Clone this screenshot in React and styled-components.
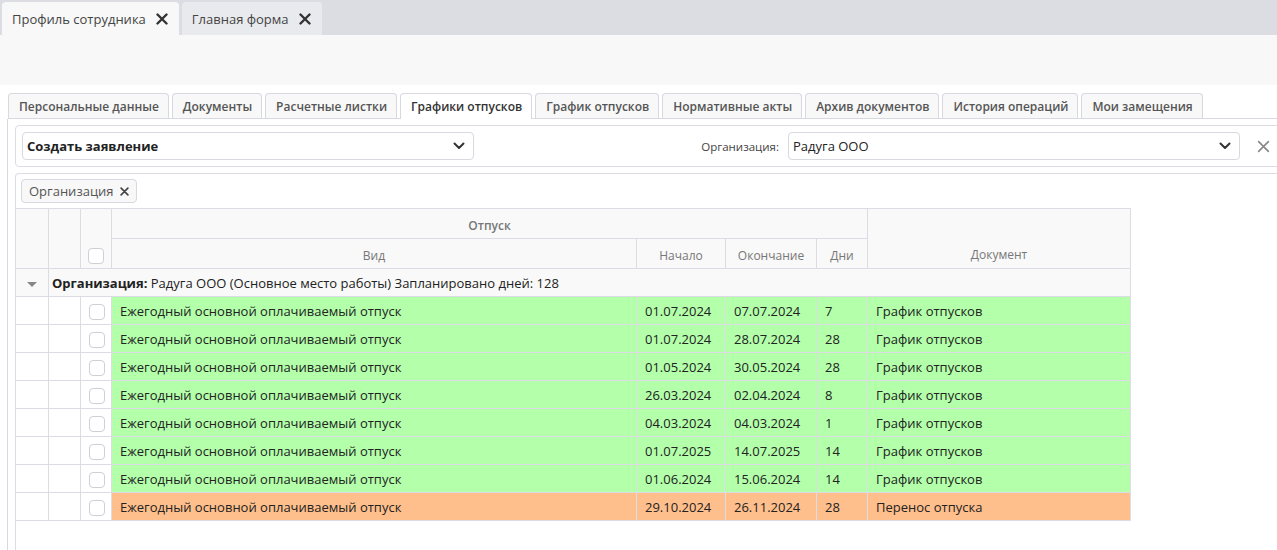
import React from "react";
import styled, { createGlobalStyle } from "styled-components";

const Global = createGlobalStyle`
  html, body { margin: 0; padding: 0; background: #fff; }
  body { width: 1277px; height: 550px; overflow: hidden; font-family: "Open Sans", "Noto Sans", sans-serif; color: #333; }
  * { box-sizing: border-box; }
`;

const TopBar = styled.div`
  height: 35px;
  background: #dcdde2;
  display: flex;
  align-items: flex-end;
  gap: 3px;
  padding-left: 2px;
`;

const TopTab = styled.div`
  height: 33px;
  display: flex;
  align-items: center;
  gap: 10px;
  padding: 0 11px 0 10px;
  border-radius: 4px 4px 0 0;
  background: ${(p) => (p.$active ? "#f8f8f8" : "#e9eaee")};
  font-size: 13px;
  color: #444;
  white-space: nowrap;
`;

const Close = styled.span`
  display: inline-flex;
  color: #333;
`;

const Header = styled.div`
  height: 50px;
  background: #f8f8f8;
`;

const Content = styled.div`
  padding: 8px 0 0 7px;
`;

const TabsRow = styled.div`
  display: flex;
  gap: 3px;
  margin-left: 1px;
  border-bottom: 1px solid #d8d8e0;
`;

const InnerTab = styled.div`
  flex-shrink: 0;
  white-space: nowrap;
  padding: 0 9px 0 10px;
  display: flex;
  align-items: center;
  font-size: 12px;
  font-weight: 600;
  color: ${(p) => (p.$active ? "#333" : "#555")};
  background: ${(p) => (p.$active ? "#fff" : "#f8f8f8")};
  border: 1px solid #d8d8e0;
  border-bottom: none;
  border-radius: 4px 4px 0 0;
  margin-bottom: ${(p) => (p.$active ? "-1px" : "0")};
  height: ${(p) => (p.$active ? "26px" : "25px")};
`;

const TabBody = styled.div`
  border-left: 1px solid #d8d8e0;
  padding: 6px 0 0 7px;
  height: 440px;
`;

const Panel = styled.div`
  width: calc(100% + 16px);
  border: 1px solid #dcdce4;
  border-radius: 4px;
`;

const Toolbar = styled(Panel)`
  height: 42px;
  display: flex;
  align-items: center;
  padding: 0 6px;
`;

const Select = styled.div`
  width: ${(p) => p.$w}px;
  height: 28px;
  border: 1px solid #d8d8e0;
  border-radius: 4px;
  display: flex;
  align-items: center;
  justify-content: space-between;
  padding: 0 8px 0 4px;
  font-size: 13px;
  font-weight: ${(p) => (p.$bold ? 700 : 400)};
  color: #222;
  background: #fff;
`;

const Label = styled.div`
  margin-left: auto;
  margin-right: 9px;
  font-size: 11.5px;
  color: #444;
`;

const ClearBtn = styled.div`
  width: 46px;
  display: flex;
  justify-content: center;
  color: #888;
`;

const GridPanel = styled(Panel)`
  margin-top: 6px;
  border-bottom: none;
  border-radius: 4px 4px 0 0;
  padding-top: 5px;
  height: 400px;
`;

const Chip = styled.div`
  display: inline-flex;
  align-items: center;
  gap: 6px;
  margin-left: 5px;
  height: 24px;
  padding: 0 7px;
  border: 1px solid #d8d8e0;
  border-radius: 4px;
  background: #f8f8f8;
  font-size: 13px;
  color: #555;
`;

const Table = styled.table`
  margin-top: 5px;
  margin-left: -1px;
  border-collapse: collapse;
  table-layout: fixed;
  width: 1115px;
  font-size: 13px;
  td, th { border: 1px solid #dcdce4; padding: 0; }
`;

const Th = styled.th`
  background: #f9f9f9;
  height: 30px;
  font-size: 12px;
  font-weight: ${(p) => (p.$bold ? 600 : 500)};
  color: #777;
  text-align: center;
  vertical-align: ${(p) => (p.$bottom ? "bottom" : "middle")};
  && { padding: ${(p) => (p.$bottom ? `0 0 ${p.$bottom}px` : "3px 0 0")}; }
`;

const Box = styled.span`
  display: inline-block;
  width: 16px;
  height: 16px;
  border: 1px solid #cfcfd6;
  border-radius: 4px;
  background: #fff;
  vertical-align: middle;
`;

const Caret = styled.span`
  display: inline-block;
  width: 0; height: 0;
  border-left: 5px solid transparent;
  border-right: 5px solid transparent;
  border-top: 5px solid #888;
  vertical-align: middle;
`;

const Row = styled.tr`
  height: 28px;
`;

const Cell = styled.td`
  background: ${(p) => p.$bg || "#fff"};
  color: #222;
  white-space: nowrap;
  text-align: ${(p) => (p.$center ? "center" : "left")};
  && { padding: 0 8px 0 ${(p) => (p.$pl != null ? p.$pl : 8)}px; }
`;

const X = ({ size = 12, stroke = 2.4, color = "currentColor" }) => (
  <svg width={size} height={size} viewBox="0 0 12 12">
    <path d="M1.5 1.5 L10.5 10.5 M10.5 1.5 L1.5 10.5" stroke={color} strokeWidth={stroke} strokeLinecap="round" />
  </svg>
);

const Chevron = () => (
  <svg width="12" height="8" viewBox="0 0 12 8">
    <path d="M1.5 1.5 L6 6 L10.5 1.5" stroke="#333" strokeWidth="2" fill="none" strokeLinecap="round" strokeLinejoin="round" />
  </svg>
);

const tabs = [
  "Персональные данные",
  "Документы",
  "Расчетные листки",
  "Графики отпусков",
  "График отпусков",
  "Нормативные акты",
  "Архив документов",
  "История операций",
  "Мои замещения",
];

const GREEN = "#b3ffaa";
const ORANGE = "#ffbf8c";
const HEAD = "#f9f9f9";

const rows = [
  ["01.07.2024", "07.07.2024", "7", "График отпусков", GREEN],
  ["01.07.2024", "28.07.2024", "28", "График отпусков", GREEN],
  ["01.05.2024", "30.05.2024", "28", "График отпусков", GREEN],
  ["26.03.2024", "02.04.2024", "8", "График отпусков", GREEN],
  ["04.03.2024", "04.03.2024", "1", "График отпусков", GREEN],
  ["01.07.2025", "14.07.2025", "14", "График отпусков", GREEN],
  ["01.06.2024", "15.06.2024", "14", "График отпусков", GREEN],
  ["29.10.2024", "26.11.2024", "28", "Перенос отпуска", ORANGE],
];

export default function App() {
  return (
    <>
      <Global />
      <TopBar>
        <TopTab $active>
          Профиль сотрудника
          <Close><X size={12} stroke={2.4} /></Close>
        </TopTab>
        <TopTab>
          Главная форма
          <Close><X size={12} stroke={2.4} /></Close>
        </TopTab>
      </TopBar>
      <Header />
      <Content>
        <TabsRow>
          {tabs.map((t, i) => (
            <InnerTab key={t} $active={i === 3}>{t}</InnerTab>
          ))}
        </TabsRow>
        <TabBody>
          <Toolbar>
            <Select $w={452} $bold>
              Создать заявление
              <Chevron />
            </Select>
            <Label>Организация:</Label>
            <Select $w={452}>
              Радуга ООО
              <Chevron />
            </Select>
            <ClearBtn><X size={13} stroke={1.5} /></ClearBtn>
          </Toolbar>
          <GridPanel>
            <Chip>
              Организация
              <X size={9} stroke={2.2} color="#444" />
            </Chip>
            <Table>
              <colgroup>
                <col style={{ width: 33 }} />
                <col style={{ width: 32 }} />
                <col style={{ width: 31 }} />
                <col style={{ width: 525 }} />
                <col style={{ width: 89 }} />
                <col style={{ width: 91 }} />
                <col style={{ width: 51 }} />
                <col style={{ width: 263 }} />
              </colgroup>
              <thead>
                <tr>
                  <Th rowSpan={2} />
                  <Th rowSpan={2} />
                  <Th rowSpan={2} $bottom={4}><Box /></Th>
                  <Th colSpan={4} $bold>Отпуск</Th>
                  <Th rowSpan={2} $bottom={5}>Документ</Th>
                </tr>
                <tr>
                  <Th>Вид</Th>
                  <Th>Начало</Th>
                  <Th>Окончание</Th>
                  <Th>Дни</Th>
                </tr>
              </thead>
              <tbody>
                <Row>
                  <Cell $center $bg={HEAD} $pl={8}><Caret /></Cell>
                  <Cell colSpan={7} $bg={HEAD} $pl={3}>
                    <b>Организация:</b> Радуга ООО (Основное место работы) Запланировано дней: 128
                  </Cell>
                </Row>
                {rows.map((r, i) => (
                  <Row key={i}>
                    <Cell />
                    <Cell />
                    <Cell $center><Box /></Cell>
                    <Cell $bg={r[4]}>Ежегодный основной оплачиваемый отпуск</Cell>
                    <Cell $bg={r[4]}>{r[0]}</Cell>
                    <Cell $bg={r[4]}>{r[1]}</Cell>
                    <Cell $bg={r[4]}>{r[2]}</Cell>
                    <Cell $bg={r[4]}>{r[3]}</Cell>
                  </Row>
                ))}
              </tbody>
            </Table>
          </GridPanel>
        </TabBody>
      </Content>
    </>
  );
}
